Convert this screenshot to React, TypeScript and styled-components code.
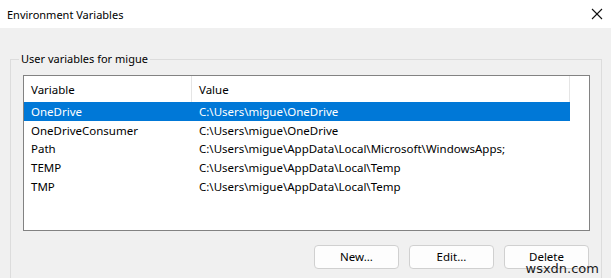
import React from 'react'
import styled, { createGlobalStyle } from 'styled-components'

const GlobalStyle = createGlobalStyle`
  html, body {
    margin: 0;
    padding: 0;
    background: #f0f0f0;
  }
  body {
    font-family: "Noto Sans", "Open Sans", "Liberation Sans", sans-serif;
    font-size: 11.5px;
    color: #000;
  }
`

interface Row {
  name: string
  value: string
}

const rows: Row[] = [
  { name: 'OneDrive', value: 'C:\\Users\\migue\\OneDrive' },
  { name: 'OneDriveConsumer', value: 'C:\\Users\\migue\\OneDrive' },
  { name: 'Path', value: 'C:\\Users\\migue\\AppData\\Local\\Microsoft\\WindowsApps;' },
  { name: 'TEMP', value: 'C:\\Users\\migue\\AppData\\Local\\Temp' },
  { name: 'TMP', value: 'C:\\Users\\migue\\AppData\\Local\\Temp' },
]

export default function App() {
  return (
    <StyledWindow>
      <GlobalStyle />
      <TitleBar>
        <Title>Environment Variables</Title>
        <CloseIcon width="12" height="12" viewBox="0 0 12 12" aria-label="Close">
          <line x1="1" y1="1" x2="11" y2="11" stroke="#111" strokeWidth="1.1" />
          <line x1="11" y1="1" x2="1" y2="11" stroke="#111" strokeWidth="1.1" />
        </CloseIcon>
      </TitleBar>

      <Body>
        <Group>
          <Legend>User variables for migue</Legend>
          <ListBox>
            <HeaderRow>
              <HeaderCell className="name">Variable</HeaderCell>
              <HeaderCell className="value">Value</HeaderCell>
            </HeaderRow>
            {rows.map((r, i) => (
              <ListRow key={r.name} selected={i === 0}>
                <Cell className="name">{r.name}</Cell>
                <Cell className="value">{r.value}</Cell>
              </ListRow>
            ))}
          </ListBox>
          <ButtonRow>
            <Button>New...</Button>
            <Button>Edit...</Button>
            <Button>Delete</Button>
          </ButtonRow>
        </Group>
      </Body>

      <Watermark>wsxdn.com</Watermark>
    </StyledWindow>
  )
}

const StyledWindow = styled.div`
  position: relative;
  width: 611px;
  height: 278px;
  overflow: hidden;
  background: #f0f0f0;
  display: flex;
  flex-direction: column;
`

const TitleBar = styled.div`
  flex-shrink: 0;
  box-sizing: border-box;
  width: 611px;
  height: 28px;
  background: #fff;
  display: flex;
  align-items: center;
  justify-content: space-between;
  padding: 0 8px 0 7px;
`

const Title = styled.div`
  font-size: 11px;
  color: #000;
`

const CloseIcon = styled.svg`
  display: block;
  flex: none;
  width: 12px;
  height: 12px;
`

const Body = styled.div`
  flex-shrink: 0;
  padding: 23px 9px 0 10px;
`

const Group = styled.fieldset`
  box-sizing: border-box;
  margin: 0;
  padding: 8px 11px 20px 12px;
  border: 1px solid #dcdcdc;
  height: 260px;
`

const Legend = styled.legend`
  margin-left: -4px;
  padding: 0 2px;
  font-size: 11px;
  line-height: 16px;
  color: #000;
`

const ListBox = styled.div`
  box-sizing: border-box;
  height: 156px;
  background: #fff;
  border: 1px solid #828282;
  display: flex;
  flex-direction: column;
`

const HeaderRow = styled.div`
  display: flex;
  height: 26px;
  > .name {
    width: 168px;
  }
  > .value {
    width: 378px;
  }
`

const HeaderCell = styled.div`
  box-sizing: border-box;
  display: flex;
  align-items: center;
  padding-left: 7px;
  border-right: 1px solid #e5e5e5;
  color: #000;
`

const ListRow = styled.div<{ selected?: boolean }>`
  display: flex;
  height: 18.75px;
  width: 546px;
  background: ${p => (p.selected ? '#0078d7' : 'transparent')};
  color: ${p => (p.selected ? '#fff' : '#000')};
  > .name {
    width: 168px;
  }
  > .value {
    flex: 1;
  }
`

const Cell = styled.div`
  box-sizing: border-box;
  display: flex;
  align-items: center;
  padding-left: 7px;
  white-space: nowrap;
`

const ButtonRow = styled.div`
  display: flex;
  justify-content: flex-end;
  gap: 10px;
  margin-top: 14px;
  padding-right: 1px;
`

const Button = styled.button`
  box-sizing: border-box;
  width: 85px;
  height: 24px;
  border: 1px solid #d0d0d0;
  border-radius: 4px;
  background: #fdfdfd;
  font-family: inherit;
  font-size: 11.5px;
  color: #000;
  padding: 0 0 2px;
`

const Watermark = styled.div`
  position: absolute;
  right: 12px;
  top: 261px;
  font-family: "DejaVu Sans", sans-serif;
  font-size: 13px;
  color: #1a1a1a;
`
